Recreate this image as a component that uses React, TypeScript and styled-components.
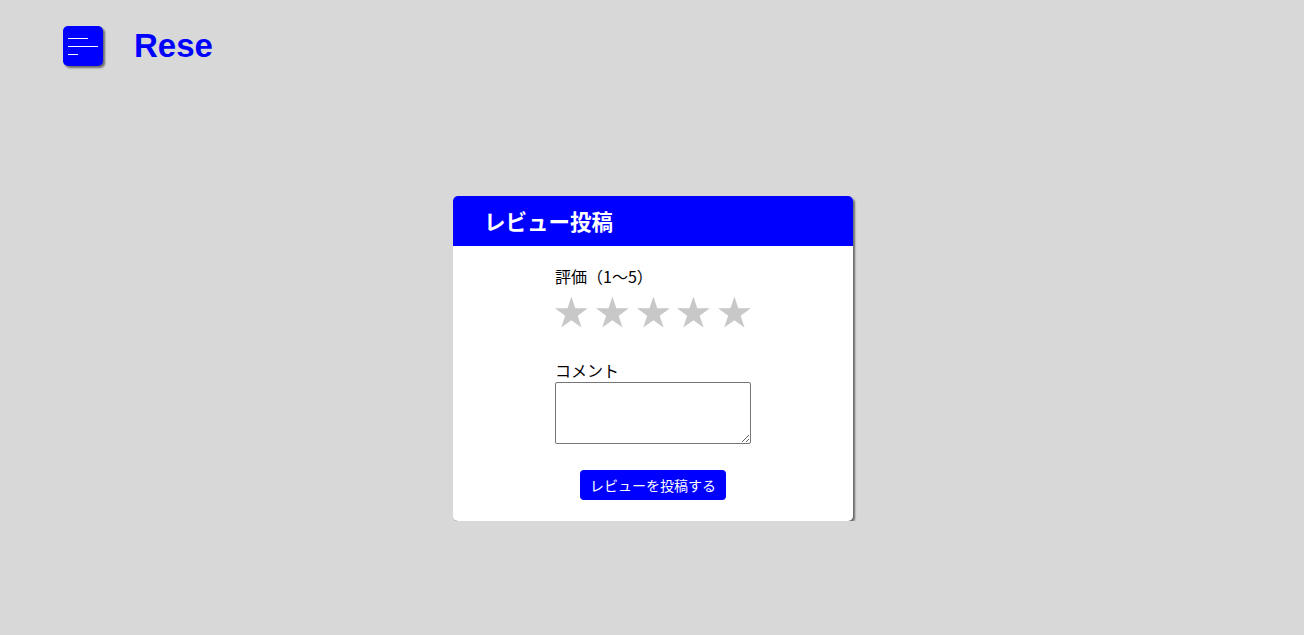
import styled, { createGlobalStyle } from "styled-components";

const GlobalStyle = createGlobalStyle`
  body {
    margin: 0;
    background: #d8d8d8;
    font-family: "Liberation Sans", "Noto Sans CJK JP", sans-serif;
  }
`;

// regular five-pointed star, same shape as the ★ glyph
const STAR_POINTS =
  "12,2 14.245,8.91 21.51,8.91 15.633,13.18 17.88,20.09 12,15.82 6.12,20.09 8.367,13.18 2.49,8.91 9.755,8.91";

const Star = () => (
  <StarIcon viewBox="2.49 2 19.02 18.09" aria-hidden>
    <polygon points={STAR_POINTS} />
  </StarIcon>
);

const App = () => {
  return (
    <>
      <GlobalStyle />
      <Header>
        <MenuButton type="button" aria-label="menu">
          <MenuLine $width={20} />
          <MenuLine $width={30} />
          <MenuLine $width={10} />
        </MenuButton>
        <Logo>Rese</Logo>
      </Header>
      <Main>
        <Card>
          <CardHeader>レビュー投稿</CardHeader>
          <CardBody>
            <Label>評価（1〜5）</Label>
            <Stars>
              {[1, 2, 3, 4, 5].map((n) => (
                <Star key={n} />
              ))}
            </Stars>
            <CommentLabel>コメント</CommentLabel>
            <TextArea />
            <SubmitButton type="button">レビューを投稿する</SubmitButton>
          </CardBody>
        </Card>
      </Main>
    </>
  );
};

export default App;

const Header = styled.header`
  display: flex;
  align-items: center;
  gap: 31px;
  padding: 26px 0 0 63px;
`;

const MenuButton = styled.button`
  width: 40px;
  height: 40px;
  padding: 0 0 0 5px;
  border: none;
  border-radius: 5px;
  background: #0000ff;
  box-shadow: 2px 2px 2px rgba(0, 0, 0, 0.5);
  display: flex;
  flex-direction: column;
  justify-content: center;
  align-items: flex-start;
  gap: 7px;
  cursor: pointer;
`;

const MenuLine = styled.span<{ $width: number }>`
  display: block;
  width: ${(p) => p.$width}px;
  height: 1px;
  background: #ffffff;
`;

const Logo = styled.h1`
  margin: 0;
  color: #0000ff;
  font-size: 33px;
  font-weight: bold;
  line-height: 40px;
`;

const Main = styled.main`
  padding-top: 130px;
  display: flex;
  justify-content: center;
`;

const Card = styled.section`
  width: 400px;
  margin-left: 2px;
  background: #ffffff;
  border-radius: 5px;
  box-shadow: 2px 2px 2px rgba(0, 0, 0, 0.5);
  overflow: hidden;
`;

const CardHeader = styled.h2`
  margin: 0;
  height: 50px;
  padding-left: 31px;
  background: #0000ff;
  color: #ffffff;
  font-family: "Noto Sans CJK JP", sans-serif;
  font-size: 21.5px;
  font-weight: bold;
  line-height: 50px;
`;

const CardBody = styled.div`
  width: 196px;
  margin: 0 auto;
  padding: 20px 0 21px;
  display: flex;
  flex-direction: column;
`;

const Label = styled.label`
  display: block;
  font-family: "Noto Sans CJK JP", sans-serif;
  font-size: 16px;
  line-height: 20px;
  color: #000000;
`;

const CommentLabel = styled(Label)`
  margin-top: 32px;
`;

const Stars = styled.div`
  display: flex;
  gap: 8px;
  margin-top: 10px;
`;

const StarIcon = styled.svg`
  width: 33px;
  height: 32px;
  fill: #c8c8c8;
`;

const TextArea = styled.textarea`
  display: block;
  box-sizing: border-box;
  width: 196px;
  height: 62px;
  margin-top: 2px;
  border: 1px solid #767676;
  border-radius: 2px;
  background: #ffffff;
`;

const SubmitButton = styled.button`
  align-self: center;
  width: 146px;
  height: 30px;
  margin-top: 26px;
  padding: 0;
  border: none;
  border-radius: 4px;
  background: #0000ff;
  color: #ffffff;
  font-family: "Noto Sans CJK JP", sans-serif;
  font-size: 14px;
  cursor: pointer;
`;
